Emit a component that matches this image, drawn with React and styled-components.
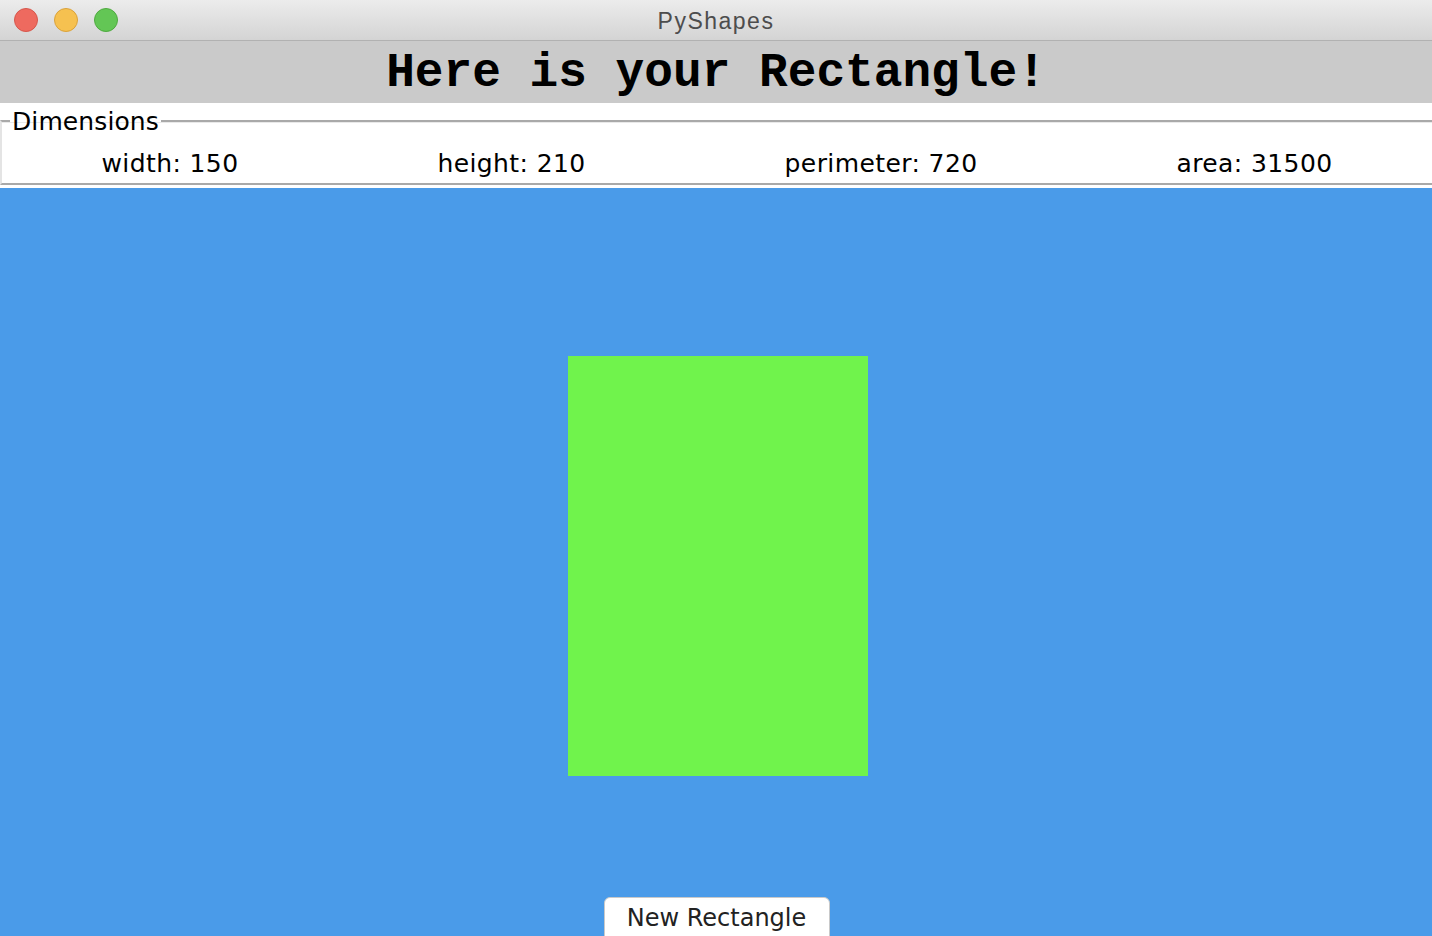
import React from "react";
import styled, { createGlobalStyle } from "styled-components";

const Global = createGlobalStyle`
  html, body { margin: 0; padding: 0; background: #4a9be9; }
  body { font-family: "DejaVu Sans", "Liberation Sans", sans-serif; }
  * { box-sizing: border-box; }
`;

const Window = styled.div`
  width: 1432px;
  height: 936px;
  overflow: hidden;
  display: flex;
  flex-direction: column;
  background: #4a9be9;
`;

const TitleBar = styled.div`
  position: relative;
  height: 41px;
  flex: none;
  display: flex;
  align-items: center;
  justify-content: center;
  background: linear-gradient(#ececec, #d4d4d4);
  border-bottom: 1px solid #b1b1b1;
`;

const Lights = styled.div`
  position: absolute;
  left: 14px;
  top: 8px;
  display: flex;
  gap: 16px;
`;

const Light = styled.span`
  width: 24px;
  height: 24px;
  border-radius: 50%;
  background: ${(p) => p.$fill};
  border: 1px solid ${(p) => p.$edge};
`;

const WindowTitle = styled.span`
  font-family: "Liberation Sans", Arial, sans-serif;
  font-size: 23px;
  letter-spacing: 1.5px;
  color: #4d4d4d;
  margin-top: 2px;
`;

const Header = styled.div`
  height: 62px;
  flex: none;
  background: #cacaca;
  display: flex;
  align-items: center;
  justify-content: center;
  font-family: "Liberation Mono", "Courier New", monospace;
  font-weight: bold;
  font-size: 47.8px;
  color: #000;
  padding-top: 2px;
`;

const Panel = styled.div`
  flex: none;
  background: #fff;
  padding: 4px 0 3px 0;
`;

const Group = styled.fieldset`
  margin: 0;
  padding: 0 0 5px 8px;
  border: none;
  border-top: 2px solid #a9a9a9;
  border-bottom: 2px solid #a9a9a9;
  border-left: 2px solid #e4e4e4;
  box-shadow: inset 0 1px 0 #e9e9e9;
  min-width: 0;
`;

const Legend = styled.legend`
  padding: 0 2px;
  font-family: "DejaVu Sans", sans-serif;
  font-size: 25px;
  line-height: 28px;
  letter-spacing: 0.1px;
  color: #000;
`;

const LegendText = styled.span`
  position: relative;
  top: 1px;
`;

const Row = styled.div`
  display: flex;
  margin-top: 15px;
  margin-left: -8px;
`;

const Stat = styled.div`
  flex: 1 1 auto;
  text-align: center;
  font-family: "DejaVu Sans", sans-serif;
  font-size: 25px;
  line-height: 28px;
  letter-spacing: 0.4px;
  color: #000;
  white-space: nowrap;
`;

const Canvas = styled.div`
  flex: 1;
  background: #4a9be9;
  display: flex;
  flex-direction: column;
  align-items: center;
`;

const Shape = styled.div`
  margin-top: 168px;
  margin-left: 4px;
  flex: none;
  background: #70f34c;
`;

const Button = styled.button`
  margin-top: 121px;
  width: 226px;
  height: 46px;
  flex: none;
  background: #fff;
  border: 1px solid #c9c9c9;
  border-radius: 6px;
  font-family: "DejaVu Sans", sans-serif;
  font-size: 24px;
  color: #222;
  padding: 0 0 4px 0;
  margin-left: 1px;
`;

const stats = [
  ["width", 150],
  ["height", 210],
  ["perimeter", 720],
  ["area", 31500],
];

export default function App() {
  return (
    <Window>
      <Global />
      <TitleBar>
        <Lights>
          <Light $fill="#ee6a5f" $edge="#d6574c" />
          <Light $fill="#f6c150" $edge="#daa23b" />
          <Light $fill="#63c655" $edge="#4faa40" />
        </Lights>
        <WindowTitle>PyShapes</WindowTitle>
      </TitleBar>
      <Header>Here is your Rectangle!</Header>
      <Panel>
        <Group>
          <Legend>
            <LegendText>Dimensions</LegendText>
          </Legend>
          <Row>
            {stats.map(([k, v]) => (
              <Stat key={k}>
                {k}: {v}
              </Stat>
            ))}
          </Row>
        </Group>
      </Panel>
      <Canvas>
        <Shape style={{ width: 300, height: 420 }} />
        <Button>New Rectangle</Button>
      </Canvas>
    </Window>
  );
}
